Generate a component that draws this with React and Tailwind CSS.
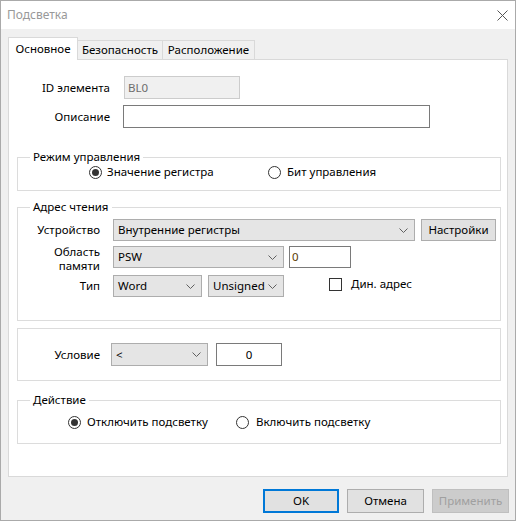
import React from "react";

const font = { fontFamily: '"Noto Sans", "Liberation Sans", sans-serif' };

function Chevron() {
  return (
    <svg width="9" height="5" viewBox="0 0 9 5" className="shrink-0">
      <path d="M0.5 0.5 L4.5 4.5 L8.5 0.5" fill="none" stroke="#606060" strokeWidth="1" />
    </svg>
  );
}

function Combo({ className, text }) {
  return (
    <div className={"flex items-center justify-between bg-[#e5e5e5] border border-[#adadad] pl-[4px] pr-[6px] " + className}>
      <span className="leading-none">{text}</span>
      <Chevron />
    </div>
  );
}

function Radio({ checked }) {
  return (
    <span className="w-[13px] h-[13px] rounded-full border border-[#333333] bg-white flex items-center justify-center shrink-0">
      {checked && <span className="w-[7px] h-[7px] rounded-full bg-[#333333]" />}
    </span>
  );
}

export default function App() {
  return (
    <div className="w-[517px] h-[522px] bg-white text-[11.5px] text-black" style={font}>
      <div className="w-[516px] h-[521px] border border-[#aaaaaa] flex flex-col">
        {/* title bar */}
        <div className="h-[28px] bg-white flex items-center justify-between pl-[6px] pr-[7px] shrink-0">
          <span className="text-[#999999] text-[12px]">Подсветка</span>
          <svg width="11" height="11" viewBox="0 0 11 11">
            <path d="M0.5 0.5 L10.5 10.5 M10.5 0.5 L0.5 10.5" stroke="#555555" strokeWidth="1" />
          </svg>
        </div>
        {/* body */}
        <div className="flex-1 bg-[#f0f0f0] pl-[7px] flex flex-col">
          {/* tabs */}
          <div className="flex items-end h-[22px] mt-[8px]">
            <div className="relative z-10 -mb-px h-[23px] w-[70px] bg-white border border-b-0 border-[#d9d9d9] flex items-center justify-center pb-[1px]">
              Основное
            </div>
            <div className="h-[19px] w-[85px] border border-l-0 border-b-0 border-[#d9d9d9] flex items-center justify-center">
              Безопасность
            </div>
            <div className="h-[19px] w-[92px] border border-l-0 border-b-0 border-[#d9d9d9] flex items-center justify-center">
              Расположение
            </div>
          </div>
          {/* panel */}
          <div className="w-[500px] h-[418px] bg-white border border-[#d9d9d9] flex flex-col">
            {/* ID */}
            <div className="flex items-center mt-[16px] h-[23px]">
              <span className="w-[101px] text-right">ID элемента</span>
              <div className="ml-[14px] w-[116px] h-[23px] bg-[#f0f0f0] border border-[#cccccc] flex items-center pl-[3px] text-[#6d6d6d]">
                BL0
              </div>
            </div>
            <div className="flex items-center mt-[6px] h-[23px]">
              <span className="w-[101px] text-right">Описание</span>
              <div className="ml-[13px] w-[307px] h-[23px] bg-white border border-[#7a7a7a]" />
            </div>

            {/* group 1 */}
            <fieldset className="ml-[8px] mt-[21px] w-[484px] border border-[#dcdcdc] pb-[11px]">
              <legend className="ml-[12px] px-[3px] leading-[16px]">Режим управления</legend>
              <div className="flex items-center h-[14px]">
                <div className="flex items-center gap-[5px] ml-[71px] w-[179px]">
                  <Radio checked />
                  <span className="leading-none">Значение регистра</span>
                </div>
                <div className="flex items-center gap-[6px]">
                  <Radio />
                  <span className="leading-none">Бит управления</span>
                </div>
              </div>
            </fieldset>

            {/* group 2 */}
            <fieldset className="ml-[8px] mt-[8px] w-[484px] border border-[#dcdcdc] pt-[4px] pb-[23px]">
              <legend className="ml-[12px] px-[3px] leading-[16px]">Адрес чтения</legend>
              <div className="flex items-center h-[22px]">
                <span className="w-[82px] text-right">Устройство</span>
                <Combo className="ml-[13px] w-[302px] h-[22px]" text="Внутренние регистры" />
                <div className="ml-[6px] w-[75px] h-[22px] bg-[#e1e1e1] border border-[#adadad] flex items-center justify-center">
                  Настройки
                </div>
              </div>
              <div className="flex items-start h-[22px] mt-[5px]">
                <div className="w-[82px] text-right flex flex-col -mt-px">
                  <span className="leading-[14px]">Область</span>
                  <span className="leading-[14px]">памяти</span>
                </div>
                <Combo className="ml-[13px] w-[171px] h-[22px]" text="PSW" />
                <div className="ml-[5px] w-[62px] h-[22px] bg-white border border-[#7a7a7a] flex items-center pl-[2px] text-[#5a3c00]">
                  0
                </div>
              </div>
              <div className="flex items-center h-[22px] mt-[7px]">
                <span className="w-[82px] text-right">Тип</span>
                <Combo className="ml-[13px] w-[89px] h-[22px]" text="Word" />
                <Combo className="ml-[6px] w-[76px] h-[22px] pl-[3px] pr-[5px]" text="Unsigned" />
                <span className="ml-[45px] -mt-[4px] w-[13px] h-[13px] border border-[#333333] bg-white shrink-0" />
                <span className="ml-[9px] -mt-[4px]">Дин. адрес</span>
              </div>
            </fieldset>

            {/* group 3 */}
            <div className="ml-[8px] mt-[7px] w-[484px] h-[53px] border border-[#dcdcdc] flex items-center">
              <span className="w-[82px] text-right">Условие</span>
              <Combo className="ml-[11px] w-[97px] h-[23px]" text="<" />
              <div className="ml-[8px] w-[66px] h-[23px] bg-white border border-[#7a7a7a] flex items-center justify-center">
                0
              </div>
            </div>

            {/* group 4 */}
            <fieldset className="ml-[8px] mt-[11px] w-[484px] border border-[#dcdcdc] pt-[7px] pb-[14px]">
              <legend className="ml-[12px] px-[3px] leading-[16px]">Действие</legend>
              <div className="flex items-center h-[14px]">
                <div className="flex items-center gap-[6px] ml-[50px] w-[168px]">
                  <Radio checked />
                  <span className="leading-none">Отключить подсветку</span>
                </div>
                <div className="flex items-center gap-[7px]">
                  <Radio />
                  <span className="leading-none">Включить подсветку</span>
                </div>
              </div>
            </fieldset>
          </div>

          {/* buttons */}
          <div className="flex mt-[12px] ml-[255px] gap-[8px]">
            <div className="w-[76px] h-[24px] bg-[#e1e1e1] border-2 border-[#0078d7] flex items-center justify-center">
              OK
            </div>
            <div className="w-[77px] h-[24px] bg-[#e1e1e1] border border-[#adadad] flex items-center justify-center">
              Отмена
            </div>
            <div className="w-[77px] h-[24px] bg-[#cccccc] border border-[#bfbfbf] flex items-center justify-center text-[#a0a0a0]">
              Применить
            </div>
          </div>
        </div>
      </div>
    </div>
  );
}
